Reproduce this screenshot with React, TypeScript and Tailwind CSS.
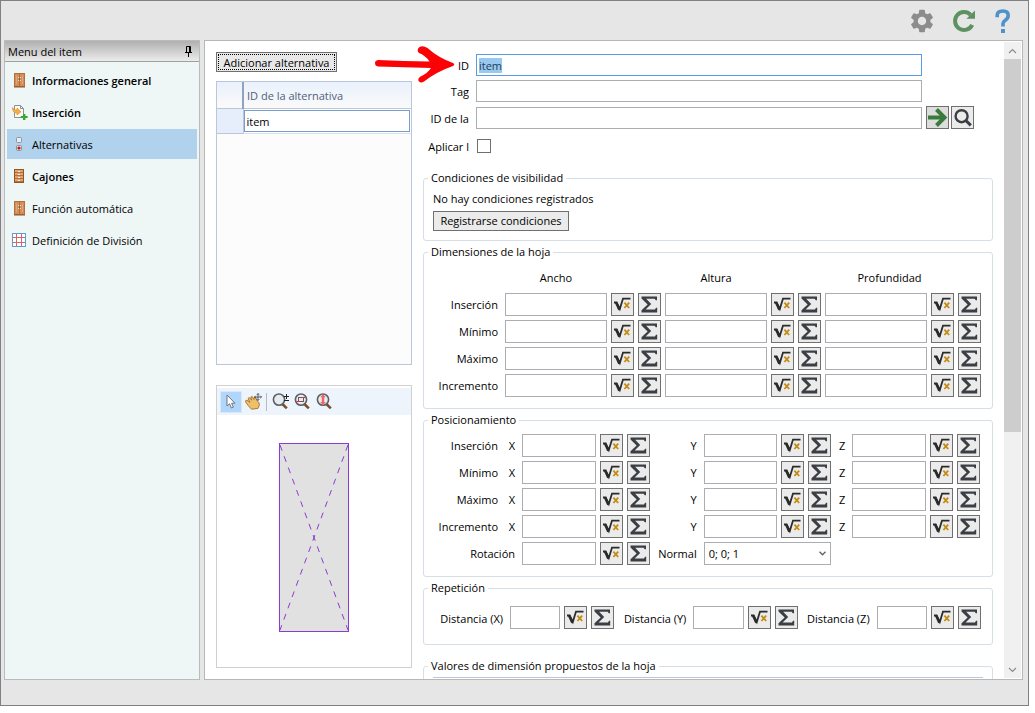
import { useEffect, useRef } from 'react'
import { MdSettings } from 'react-icons/md'
import clsx from 'clsx'

type IconProps = { className?: string }

/* ---------- Icons ---------- */

function SqrtIcon() {
  return (
    <svg width="17" height="15" viewBox="0 0 17 15" fill="none">
      <path d="M0 5.5H2.6L5.8 12L9 1.6H16.5" stroke="#2b2b2b" strokeWidth="1.8" />
      <path d="M2 5.2L5.4 12.6" stroke="#2b2b2b" strokeWidth="2.6" />
      <path d="M10.4 5.6L15.2 11M15.2 5.6L10.4 11" stroke="#c48a12" strokeWidth="1.8" />
    </svg>
  )
}

function SigmaIcon() {
  return (
    <svg width="17" height="17" viewBox="0 0 17 17" fill="#3b3f44">
      <path d="M0.5 0.5H16V4.2H14.8L13.6 2.8H5.2L10.2 8L4.6 13.4H14L15 11.8H16.2V16.4H0.5V14.2L6.6 8.4L0.5 2.4Z" />
    </svg>
  )
}

function DoorsIcon() {
  return (
    <svg width="12" height="15" viewBox="0 0 12 15">
      <rect x="0.5" y="0.5" width="10" height="13" fill="#d68d55" stroke="#b0713c" />
      <path d="M5.5 1V13" stroke="#b0713c" />
      <path d="M4.5 4V8M6.5 4V8" stroke="#f6e3d0" />
      <path d="M4 6H7" stroke="#5d5148" />
      <path d="M2.5 2.5V11M8.5 2.5V11" stroke="#e3a878" />
      <path d="M0 14H11" stroke="#8c5426" />
    </svg>
  )
}

function DrawersIcon() {
  return (
    <svg width="12" height="15" viewBox="0 0 12 15">
      <rect x="0.5" y="0.5" width="9" height="13" fill="#b5703a" stroke="#94571f" />
      {[1, 4, 7, 10].map((y) => (
        <g key={y}>
          <rect x="1" y={y} width="8" height="2" fill="#e0a070" />
          <rect x="4" y={y + 1} width="2" height="1" fill="#fff3e6" />
        </g>
      ))}
    </svg>
  )
}

function InsertIcon() {
  return (
    <svg className="-ml-[2px] shrink-0" width="16" height="15" viewBox="0 0 16 15">
      <path d="M2.500 0.5H8.5L11.500 3.5V12.5H2.500Z" fill="#fafafa" stroke="#8c8f94" />
      <path d="M8.5 0.5V3.5H11.5" fill="none" stroke="#8c8f94" />
      <path d="M0.5 2.5C1.5 4.5 3 5 5 5V3L9 6.8L5 10V8C2.5 8 0.5 6.5 0.5 2.5Z" fill="#f4b042" stroke="#d98a1d" strokeWidth="0.6" />
      <path d="M11 9H13.4V11H15.6V13H13.4V15H11V13H8.8V11H11Z" fill="#35a835" />
    </svg>
  )
}

function RadioPairIcon() {
  return (
    <svg width="12" height="15" viewBox="0 0 12 15">
      <rect x="2.5" y="0.5" width="5" height="5" rx="1" fill="#e7edf2" stroke="#8c939b" />
      <rect x="2.5" y="8.5" width="5" height="5" rx="1" fill="#e2dede" stroke="#8c939b" />
      <circle cx="5" cy="11" r="1.6" fill="#c01818" />
    </svg>
  )
}

function GridIcon() {
  return (
    <svg className="-ml-[2px] shrink-0" width="15" height="15" viewBox="0 0 15 15" fill="none">
      <rect x="0.5" y="0.5" width="13" height="13" fill="#fff" stroke="#5a9fd4" />
      <path d="M4.5 1V13M9.5 1V13M1 4.5H13M1 9.5H13" stroke="#d2686c" />
    </svg>
  )
}

function PinIcon() {
  return (
    <svg width="7" height="11" viewBox="0 0 7 11" fill="none" stroke="#000">
      <path d="M1.5 6V0.5H5.5V6M4.5 1V6M0 6.5H7M3.5 7V11" />
    </svg>
  )
}

function RefreshIcon() {
  return (
    <svg width="24" height="24" viewBox="0 0 24 24">
      <path d="M18.6 5.8A9 9 0 1 0 20.2 15.8" fill="none" stroke="#5d9161" strokeWidth="4" />
      <path d="M23 1.5V9.8H14.4Z" fill="#5d9161" />
    </svg>
  )
}

function HelpIcon() {
  return (
    <svg width="16" height="24" viewBox="0 0 16 24">
      <path d="M2.2 8.2V6.6Q2.2 2 8 2Q13.2 2 13.2 6.4Q13.2 9 10.4 11.2Q8 13 8 14.6V17.4" fill="none" stroke="#4f91cb" strokeWidth="3.6" />
      <rect x="6" y="20" width="4" height="4" fill="#4f91cb" />
    </svg>
  )
}

function GoIcon() {
  return (
    <svg width="21" height="19" viewBox="0 0 21 19" fill="none" stroke="#3a7a3c" strokeWidth="4">
      <path d="M1 9.5H17" />
      <path d="M9.5 1.5L17.5 9.5L9.5 17.5" />
    </svg>
  )
}

function SearchIcon() {
  return (
    <svg width="18" height="18" viewBox="0 0 18 18" fill="none" stroke="#3a3e45">
      <circle cx="7.6" cy="7.2" r="6" strokeWidth="2.4" />
      <path d="M11.6 11.2L16.8 16.4" strokeWidth="3" />
    </svg>
  )
}

function CursorIcon() {
  return (
    <svg width="12" height="16" viewBox="0 0 12 16">
      <path d="M2 1V12L4.6 9.8L6.4 14L8.4 13.2L6.6 9.2H10Z" fill="#fff" stroke="#6f7680" />
    </svg>
  )
}

function PanIcon() {
  return (
    <svg width="17" height="17" viewBox="0 0 17 17">
      <path
        d="M1 7L3 7.8L5 9.4L3 5.4L4.4 4.6L6.6 7.2L5.8 4L7.2 3.4L9 6.6L9.2 4.4L10.6 4.6L12.4 8.4L14 9.6L14.4 12L13 15.4L6.500 16.2L3.4 12.8L0.6 9Z"
        fill="#efc06a"
        stroke="#9a6420"
        strokeWidth="0.8"
      />
      <path d="M13 0.5V7.500M9.5 4H16.5M11.8 1.8L13 0.6L14.2 1.8M11.8 6.2L13 7.4L14.2 6.2M10.7 2.8L9.5 4L10.7 5.2M15.3 2.8L16.500 4L15.3 5.2" fill="none" stroke="#333a44" strokeWidth="0.8" />
    </svg>
  )
}

function LensIcon({ kind }: { kind: 'zoom' | 'window' | 'extents' }) {
  return (
    <svg width="17" height="17" viewBox="0 0 17 17" fill="none">
      <path d="M10.4 11L14.8 15.4" stroke="#7c4f26" strokeWidth="2.6" />
      <circle cx="7" cy="6.6" r="5.6" fill="#e6ecf0" stroke="#5d5f63" strokeWidth="1.6" />
      {kind === 'zoom' && <path d="M12 3.5H17M14.5 1V6M12 7.5H17" stroke="#22262b" />}
      {kind === 'window' && (
        <>
          <rect x="4.5" y="4.5" width="5" height="4" stroke="#5d5f63" />
          <path d="M2.5 8.5H7M7 4.5H11.500" stroke="#e03030" />
        </>
      )}
      {kind === 'extents' && <path d="M7 1.2L9.8 4.2H8.2V9H9.8L7 12L4.2 9H5.8V4.2H4.2Z" fill="#f06464" />}
    </svg>
  )
}

function Chevron({ className }: IconProps) {
  return (
    <svg className={className} width="9" height="6" viewBox="0 0 9 6" fill="none" stroke="#8b8b8b" strokeWidth="1.2">
      <path d="M1 1L4.5 4.5L8 1" />
    </svg>
  )
}

/* ---------- Form parts ---------- */

function IconButton({ label, className, children }: { label: string; className?: string; children: React.ReactNode }) {
  return (
    <button
      type="button"
      aria-label={label}
      className={clsx('flex h-[23px] w-[23px] shrink-0 items-center justify-center border border-[#707070]', className ?? 'bg-[#ebebeb]')}
    >
      {children}
    </button>
  )
}

// Text box followed by its formula and sum buttons, laid in three grid cells
function FormulaField({ label }: { label: string }) {
  return (
    <>
      <input type="text" aria-label={label} className="h-[23px] w-full min-w-0 border border-[#abadb3] bg-white px-1 outline-none" />
      <IconButton label={`Fórmula de ${label}`}>
        <SqrtIcon />
      </IconButton>
      <IconButton label={`Suma de ${label}`}>
        <SigmaIcon />
      </IconButton>
    </>
  )
}

function Group({ title, className, children }: { title: string; className?: string; children: React.ReactNode }) {
  return (
    <fieldset className={clsx('min-w-0 rounded-[3px] border border-[#d5dfe5]', className)}>
      <legend className="ml-1 h-4 px-[3px]">{title}</legend>
      {children}
    </fieldset>
  )
}

function TextRow({ id, label, children }: { id: string; label: string; children: React.ReactNode }) {
  return (
    <div className="flex items-center">
      <label htmlFor={id} className="w-[46px] shrink-0 overflow-hidden pt-[2px] text-right whitespace-nowrap">
        {label}
      </label>
      <div className="ml-[7px] flex flex-1 items-center gap-1">{children}</div>
    </div>
  )
}

/* ---------- Panels ---------- */

const menuItems = [
  { label: 'Informaciones general', icon: DoorsIcon, bold: true },
  { label: 'Inserción', icon: InsertIcon, bold: true },
  { label: 'Alternativas', icon: RadioPairIcon, active: true },
  { label: 'Cajones', icon: DrawersIcon, bold: true },
  { label: 'Función automática', icon: DoorsIcon },
  { label: 'Definición de División', icon: GridIcon },
]

const rowNames = ['Inserción', 'Mínimo', 'Máximo', 'Incremento']

function Sidebar() {
  return (
    <aside className="w-[196px] shrink-0 border border-[#b8bcbc] bg-[#eff6f6]">
      <div className="flex h-[21px] items-center justify-between border-b border-[#a0a0a0] bg-linear-to-b from-[#b0b0b0] to-[#ececec] pr-[7px] pl-[3px]">
        <h2 className="pt-[2px]">Menu del item</h2>
        <button type="button" aria-label="Fijar">
          <PinIcon />
        </button>
      </div>
      <nav className="flex flex-col gap-[2px] px-[2px] pt-[3px]">
        {menuItems.map(({ label, icon: Icon, bold, active }) => (
          <button
            key={label}
            type="button"
            className={clsx('flex h-[30px] items-center pl-[7px] text-left', bold && 'font-semibold', active && 'bg-[#b0d2ec]')}
          >
            <span className="flex w-[18px] shrink-0 items-center">
              <Icon />
            </span>
            <span className="pt-[2px]">{label}</span>
          </button>
        ))}
      </nav>
    </aside>
  )
}

function AlternativesColumn() {
  return (
    <div className="flex w-[196px] shrink-0 flex-col pt-[11px] pb-[11px]">
      <button type="button" className="h-5 w-[121px] self-start border border-[#707070] bg-[#e8e8e8] p-px">
        <span className="flex h-full items-center justify-center border border-dotted border-black pt-px whitespace-nowrap">
          Adicionar alternativa
        </span>
      </button>

      <div className="mt-[9px] flex-1 border border-[#b9c7d8] bg-[#fcfcfc]">
        <table className="w-full border-collapse">
          <thead>
            <tr className="h-[26px] bg-linear-to-b from-[#eaf1fc] to-[#fafafa]">
              <th className="w-[26px] border-b border-[#b9c7d8]" />
              <th className="border-b border-l-2 border-b-[#b9c7d8] border-l-[#8fa3bd] pt-[2px] pl-[3px] text-left font-normal text-[#4f617c]">
                ID de la alternativa
              </th>
            </tr>
          </thead>
          <tbody>
            <tr className="h-[25px]">
              <td className="border-r border-b border-[#b9c7d8] bg-[#e7eefb]" />
              <td className="border-b border-[#d5e3f5] bg-white pr-px">
                <input
                  type="text"
                  aria-label="ID de la alternativa"
                  defaultValue="item"
                  className="block h-[22px] w-full border border-[#7a9cc8] bg-white px-[2px] pt-px outline-none"
                />
              </td>
            </tr>
          </tbody>
        </table>
      </div>

      <div className="mt-[20px] h-[283px] shrink-0 border border-[#d0d0d0] bg-white pt-[2px]">
        <div className="flex h-[27px] items-center bg-[#edf4fc] pl-[3px]">
          <button type="button" aria-label="Seleccionar" className="flex h-[22px] w-[22px] items-center justify-center border border-[#dbe9f7] bg-[#b0d6fb]">
            <CursorIcon />
          </button>
          <button type="button" aria-label="Mover" className="flex w-[22px] justify-center">
            <PanIcon />
          </button>
          <span className="mx-[2px] h-[18px] w-px bg-[#b5bcc6]" />
          <button type="button" aria-label="Zoom" className="flex w-[22px] justify-center">
            <LensIcon kind="zoom" />
          </button>
          <button type="button" aria-label="Zoom de ventana" className="flex w-[22px] justify-center">
            <LensIcon kind="window" />
          </button>
          <button type="button" aria-label="Ver todo" className="flex w-[22px] justify-center">
            <LensIcon kind="extents" />
          </button>
        </div>
        <svg className="mx-auto mt-[28px]" width="70" height="189" viewBox="0 0 70 189" fill="none" stroke="#8a3ccf">
          <rect x="0.5" y="0.5" width="69" height="188" fill="#e1e1e1" />
          <path d="M1 2L69 187M69 2L1 187" strokeDasharray="6 6" />
        </svg>
      </div>
    </div>
  )
}

function DimensionsGroup() {
  return (
    <Group title="Dimensiones de la hoja" className="mt-[3px] pr-[11px] pb-[11px]">
      <div className="mt-[10px] grid grid-cols-[77px_1fr_23px_23px_1fr_23px_23px_1fr_23px_23px] items-center gap-1">
        <span />
        <span className="mb-[3px] text-center">Ancho</span>
        <span className="col-span-2" />
        <span className="mb-[3px] text-center">Altura</span>
        <span className="col-span-2" />
        <span className="col-span-2 mb-[3px] text-center">Profundidad</span>
        <span />
        {rowNames.map((row) => (
          <div key={row} className="contents">
            <span className="pr-[3px] text-right">{row}</span>
            <FormulaField label={`${row} ancho`} />
            <FormulaField label={`${row} altura`} />
            <FormulaField label={`${row} profundidad`} />
          </div>
        ))}
      </div>
    </Group>
  )
}

function PositionGroup() {
  return (
    <Group title="Posicionamiento" className="mt-[3px] pr-[12px] pb-[11px]">
      <div className="mt-[6px] grid grid-cols-[74px_16px_1fr_23px_23px_46px_1fr_23px_23px_13px_1fr_23px_23px] items-center gap-1">
        {rowNames.map((row) => (
          <div key={row} className="contents">
            <span className="text-right">{row}</span>
            <span className="pr-[3px] text-right">X</span>
            <FormulaField label={`${row} X`} />
            <span className="pr-[3px] text-right">Y</span>
            <FormulaField label={`${row} Y`} />
            <span className="pr-[3px] text-right">Z</span>
            <FormulaField label={`${row} Z`} />
          </div>
        ))}
        <span className="col-span-2 pr-[3px] text-right">Rotación</span>
        <FormulaField label="Rotación" />
        <label htmlFor="normal" className="pr-[3px] text-right">
          Normal
        </label>
        <div className="relative col-span-3">
          <select id="normal" className="block h-[23px] w-full appearance-none border border-[#abadb3] bg-white px-1 outline-none">
            <option>0; 0; 1</option>
          </select>
          <svg className="pointer-events-none absolute top-[9px] right-[5px]" width="7" height="5" viewBox="0 0 7 5" fill="none" stroke="#606060" strokeWidth="1.3">
            <path d="M0.5 0.8L3.5 3.8L6.500 0.8" />
          </svg>
        </div>
      </div>
    </Group>
  )
}

function RepetitionGroup() {
  return (
    <Group title="Repetición" className="mt-[3px] pr-[11px] pb-[15px]">
      <div className="mt-[10px] grid grid-cols-[82px_1fr_23px_23px_71px_1fr_23px_23px_71px_1fr_23px_23px] items-center gap-1">
        {['X', 'Y', 'Z'].map((axis) => (
          <div key={axis} className="contents">
            <span className="pt-[2px] pr-[3px] text-right whitespace-nowrap">Distancia ({axis})</span>
            <FormulaField label={`distancia ${axis}`} />
          </div>
        ))}
      </div>
    </Group>
  )
}

function ItemForm() {
  const idInput = useRef<HTMLInputElement>(null)

  useEffect(() => {
    idInput.current?.focus()
    idInput.current?.select()
  }, [])

  const box = 'h-[22px] w-[446px] min-w-0 border bg-white px-[2px] outline-none'

  return (
    <form className="ml-[11px] flex min-w-0 flex-1 flex-col pt-[13px]">
      <div className="flex flex-col gap-1">
        <TextRow id="item-id" label="ID">
          <input
            id="item-id"
            ref={idInput}
            type="text"
            defaultValue="item"
            className={clsx(box, 'border-[#569de5] selection:bg-[#99c9ef] selection:text-[#1f3f5c]')}
          />
        </TextRow>
        <TextRow id="item-tag" label="Tag">
          <input id="item-tag" type="text" className={clsx(box, 'border-[#abadb3]')} />
        </TextRow>
        <TextRow id="item-ref" label="ID de la">
          <input id="item-ref" type="text" className={clsx(box, 'border-[#abadb3]')} />
          <div className="flex gap-[2px]">
            <IconButton label="Ir" className="bg-[#dddddd]">
              <GoIcon />
            </IconButton>
            <IconButton label="Buscar">
              <SearchIcon />
            </IconButton>
          </div>
        </TextRow>
      </div>
      <div className="mt-2 h-4">
        <TextRow id="item-apply" label="Aplicar l">
          <input id="item-apply" type="checkbox" className="ml-px h-[14px] w-[14px] appearance-none border border-[#707070] bg-white" />
        </TextRow>
      </div>

      <Group title="Condiciones de visibilidad" className="mt-[17px] pb-[9px]">
        <div className="pl-[9px]">
          <p className="mt-[5px]">No hay condiciones registrados</p>
          <button type="button" className="mt-1 block h-5 w-[136px] border border-[#707070] bg-[#ebebeb] leading-4 whitespace-nowrap">
            Registrarse condiciones
          </button>
        </div>
      </Group>
      <DimensionsGroup />
      <PositionGroup />
      <RepetitionGroup />
      <Group title="Valores de dimensión propuestos de la hoja" className="mt-[13px] h-[80px] shrink-0">
        <div className="mx-[9px] mt-[3px] h-10 border-t border-[#b9c7d8]" />
      </Group>
    </form>
  )
}

function ScrollBar() {
  return (
    <div className="mt-px mr-px mb-px ml-[11px] flex w-[17px] shrink-0 flex-col bg-[#f0f0f0]">
      <button type="button" aria-label="Subir" className="flex h-[17px] items-center justify-center">
        <Chevron className="rotate-180" />
      </button>
      <div className="flex-1">
        <div className="h-[62%] bg-[#cdcdcd]" />
      </div>
      <button type="button" aria-label="Bajar" className="flex h-[17px] items-center justify-center">
        <Chevron />
      </button>
    </div>
  )
}

// Red callout that points at the ID field
function PointerArrow() {
  return (
    <svg className="pointer-events-none absolute top-[5px] left-[169px]" width="82" height="38" viewBox="0 0 82 38" fill="#fb0207">
      <path d="M4 14Q1 14.5 1 17Q1 20 4 20.5L57 22Q54 27 46.5 30.5Q43 33 45 35.5Q47 37.5 50 35.5Q63 25.5 79 20Q81.500 18.500 79 17Q64 11.500 53.500 2Q49 -1 45.500 1Q42 4 45 7Q51 9 55.500 15.500Q30 15 4 14Z" />
    </svg>
  )
}

export default function App() {
  return (
    <div className="h-screen bg-white pr-[6px] pb-[7px] font-['Open_Sans','Noto_Sans',sans-serif] text-[11px] leading-4 text-black">
      <div className="flex h-full flex-col border border-[#808080] bg-[#e6e6e6]">
        <header className="flex h-[39px] shrink-0 items-center justify-end gap-4 pr-[17px]">
          <button type="button" aria-label="Configuración">
            <MdSettings size={28} color="#8c8c8c" />
          </button>
          <button type="button" aria-label="Actualizar" className="mr-[3px]">
            <RefreshIcon />
          </button>
          <button type="button" aria-label="Ayuda">
            <HelpIcon />
          </button>
        </header>

        <main className="flex min-h-0 flex-1 gap-1 pr-[5px] pl-[3px]">
          <Sidebar />
          <section className="relative flex min-w-0 flex-1 overflow-hidden border border-[#b5b8b8] bg-white pl-[11px]">
            <AlternativesColumn />
            <ItemForm />
            <ScrollBar />
            <PointerArrow />
          </section>
        </main>

        <footer className="h-[25px] shrink-0" />
      </div>
    </div>
  )
}
